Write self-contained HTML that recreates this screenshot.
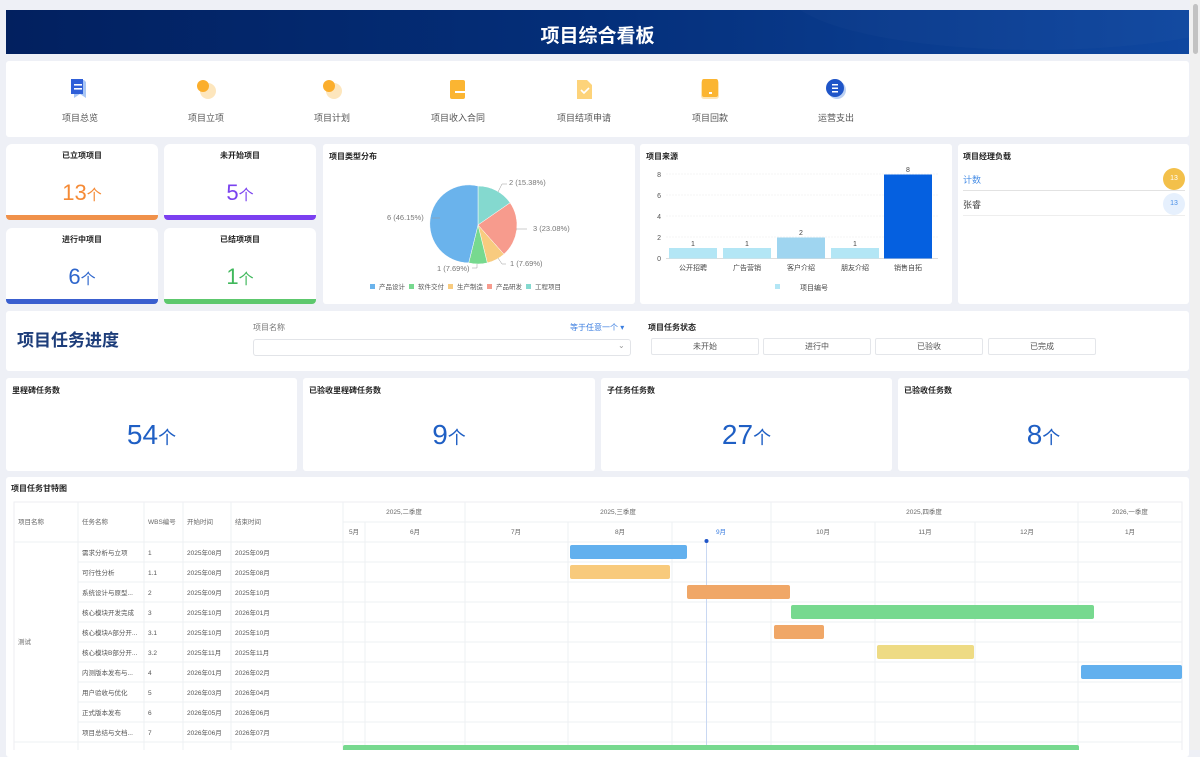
<!DOCTYPE html>
<html><head><meta charset="utf-8"><style>
*{margin:0;padding:0;box-sizing:border-box}
body{width:1200px;height:750px;overflow:hidden;background:#eef0f6;font-family:"Liberation Sans","Noto Sans CJK SC",sans-serif;color:#333;position:relative}
.a{position:absolute}
.card{position:absolute;background:#fff;border-radius:3px}
.t{font-size:8px;font-weight:bold;color:#222}
.nav{position:absolute;top:111px;font-size:9px;color:#555;width:100px;text-align:center;margin-left:-50px}
.ic{position:absolute;top:78px;width:22px;height:22px;margin-left:-11px}
.stat{text-align:center}
.stat .t{position:absolute;top:6px;left:0;right:0;text-align:center}
.stat .v{position:absolute;top:36px;left:0;right:0;text-align:center;font-size:22px}
.stat .v span{font-size:15px}
.stat .b{position:absolute;left:0;right:0;bottom:0;height:5px;border-radius:0 0 4px 4px}
.m .v{position:absolute;top:41px;left:0;right:0;text-align:center;font-size:28px;color:#1f5fc4}
.m .v span{font-size:18px}
.m .t{position:absolute;left:6px;top:7px}
.btn{position:absolute;top:338px;height:17px;width:108px;border:1px solid #e4e6ea;border-radius:2px;font-size:8px;color:#555;text-align:center;line-height:15px}
</style></head><body>
<div class="a" style="left:1190px;top:0;width:10px;height:750px;background:#f0f0f0"></div>
<div class="a" style="left:1193px;top:4px;width:5px;height:50px;background:#c2c2c2;border-radius:3px"></div>
<div class="a" style="left:6px;top:10px;width:1183px;height:44px;background:linear-gradient(90deg,#02205f 0%,#042f7a 50%,#0f47a0 100%);overflow:hidden">
<div class="a" style="left:780px;top:-80px;width:500px;height:120px;border-radius:50%;background:rgba(255,255,255,0.02)"></div>
<div class="a" style="left:0;right:0;top:11px;text-align:center;color:#fff;font-size:19px;font-weight:bold">项目综合看板</div>
</div>
<div class="card" style="left:6px;top:61px;width:1183px;height:76px"></div>
<svg class="ic" style="left:80px" viewBox="0 0 22 22"><path d="M5 2h10l2 2v16l-6-4-6 4z" fill="#a9c6f5"/><rect x="2" y="1" width="12" height="15" fill="#2f5fd8"/><rect x="5" y="6" width="8" height="1.6" fill="#fff"/><rect x="5" y="10" width="8" height="1.6" fill="#fff"/></svg>
<svg class="ic" style="left:206px" viewBox="0 0 22 22"><circle cx="13" cy="13" r="8" fill="#fde6bd"/><circle cx="8" cy="8" r="6" fill="#fbae2c"/></svg>
<svg class="ic" style="left:332px" viewBox="0 0 22 22"><circle cx="13" cy="13" r="8" fill="#fde6bd"/><circle cx="8" cy="8" r="6" fill="#fbae2c"/></svg>
<svg class="ic" style="left:458px" viewBox="0 0 22 22"><rect x="3" y="2" width="15" height="19" rx="2" fill="#fbb532"/><rect x="8" y="13" width="11" height="2" fill="#fff"/></svg>
<svg class="ic" style="left:584px" viewBox="0 0 22 22"><path d="M4 2h10l5 5v14H4z" fill="#fdd37a"/><path d="M8 12l3 3 5-5" stroke="#fff" stroke-width="1.6" fill="none"/></svg>
<svg class="ic" style="left:710px" viewBox="0 0 22 22"><rect x="2" y="2" width="18" height="19" rx="3" fill="#fde5b6"/><rect x="3" y="1" width="16" height="18" rx="2" fill="#fbb532"/><rect x="10" y="14" width="3" height="2" fill="#fff"/></svg>
<svg class="ic" style="left:836px" viewBox="0 0 22 22"><circle cx="12" cy="12" r="9" fill="#bcd1f3"/><circle cx="10" cy="10" r="9" fill="#1f55c8"/><rect x="7" y="6" width="6" height="1.5" fill="#fff"/><rect x="7" y="9.5" width="6" height="1.5" fill="#fff"/><rect x="7" y="13" width="6" height="1.5" fill="#fff"/></svg>
<div class="nav" style="left:80px">项目总览</div>
<div class="nav" style="left:206px">项目立项</div>
<div class="nav" style="left:332px">项目计划</div>
<div class="nav" style="left:458px">项目收入合同</div>
<div class="nav" style="left:584px">项目结项申请</div>
<div class="nav" style="left:710px">项目回款</div>
<div class="nav" style="left:836px">运营支出</div>
<div class="card stat" style="left:6px;top:144px;width:152px;height:76px;border-radius:6px"><div class="t">已立项项目</div><div class="v" style="color:#f58a35">13<span>个</span></div><div class="b" style="background:#f0914a"></div></div>
<div class="card stat" style="left:164px;top:144px;width:152px;height:76px;border-radius:6px"><div class="t">未开始项目</div><div class="v" style="color:#7a42ef">5<span>个</span></div><div class="b" style="background:#7b3ff0"></div></div>
<div class="card stat" style="left:6px;top:228px;width:152px;height:76px;border-radius:6px"><div class="t">进行中项目</div><div class="v" style="color:#2e66cc">6<span>个</span></div><div class="b" style="background:#3a5fcf"></div></div>
<div class="card stat" style="left:164px;top:228px;width:152px;height:76px;border-radius:6px"><div class="t">已结项项目</div><div class="v" style="color:#40b85c">1<span>个</span></div><div class="b" style="background:#5dc86d"></div></div>
<div class="card" style="left:323px;top:144px;width:312px;height:160px"><div class="t a" style="left:6px;top:7px">项目类型分布</div></div>
<svg class="a" style="left:0;top:0" width="1200" height="310">
<g stroke="#fff" stroke-width="0.5">
<path d="M478,225L478,186A39,39 0 0 1 510.1,202.8Z" fill="#84d9cf"/>
<path d="M478,225L510.1,202.8A39,39 0 0 1 503.9,254.2Z" fill="#f79b8d"/>
<path d="M478,225L503.9,254.2A39,39 0 0 1 487.3,262.9Z" fill="#f8cb7f"/>
<path d="M478,225L487.3,262.9A39,39 0 0 1 468.7,262.9Z" fill="#77d98f"/>
<path d="M478,225L468.7,262.9A39,39 0 1 1 478,186Z" fill="#6ab3ec"/>
</g>
<g stroke="#999" stroke-width="0.5" fill="none">
<path d="M498,192L502,184H507"/><path d="M516,229H527"/><path d="M498,258L502,264H506"/><path d="M477,264V268H472"/><path d="M440,218H432"/>
</g>
<g font-size="7.5" fill="#777" font-family="Liberation Sans,sans-serif">
<text x="509" y="185">2 (15.38%)</text><text x="533" y="231">3 (23.08%)</text><text x="510" y="266">1 (7.69%)</text><text x="437" y="271">1 (7.69%)</text><text x="387" y="220">6 (46.15%)</text>
</g>
<g font-size="6.5" fill="#555" font-family="Liberation Sans,Noto Sans CJK SC,sans-serif">
<rect x="370" y="284" width="5" height="5" fill="#6ab3ec"/><text x="379" y="289">产品设计</text>
<rect x="409" y="284" width="5" height="5" fill="#77d98f"/><text x="418" y="289">软件交付</text>
<rect x="448" y="284" width="5" height="5" fill="#f8cb7f"/><text x="457" y="289">生产制造</text>
<rect x="487" y="284" width="5" height="5" fill="#f79b8d"/><text x="496" y="289">产品研发</text>
<rect x="526" y="284" width="5" height="5" fill="#84d9cf"/><text x="535" y="289">工程项目</text>
</g>
</svg>
<div class="card" style="left:640px;top:144px;width:312px;height:160px"><div class="t a" style="left:6px;top:7px">项目来源</div></div>
<svg class="a" style="left:0;top:0" width="1200" height="310">
<g stroke="#eee" stroke-width="0.6" stroke-dasharray="2,1"><path d="M666,174H938M666,195H938M666,216H938M666,237H938"/></g>
<path d="M666,258.5H938" stroke="#ddd"/>
<g font-size="7" fill="#555" font-family="Liberation Sans,sans-serif" text-anchor="end"><text x="661" y="177">8</text><text x="661" y="198">6</text><text x="661" y="219">4</text><text x="661" y="240">2</text><text x="661" y="261">0</text></g>
<rect x="669" y="248" width="48" height="10.5" fill="#b3e6f5"/><rect x="723" y="248" width="48" height="10.5" fill="#b3e6f5"/><rect x="777" y="237.5" width="48" height="21" fill="#9fd5f0"/><rect x="831" y="248" width="48" height="10.5" fill="#b3e6f5"/><rect x="884" y="174.5" width="48" height="84" fill="#0560e0"/>
<g font-size="7" fill="#444" font-family="Liberation Sans,Noto Sans CJK SC,sans-serif" text-anchor="middle">
<text x="693" y="246">1</text><text x="747" y="246">1</text><text x="801" y="235">2</text><text x="855" y="246">1</text><text x="908" y="172">8</text>
<text x="693" y="270">公开招聘</text><text x="747" y="270">广告营销</text><text x="801" y="270">客户介绍</text><text x="855" y="270">朋友介绍</text><text x="908" y="270">销售自拓</text>
<text x="800" y="290" text-anchor="start">项目编号</text></g>
<rect x="775" y="284" width="5" height="5" fill="#b3e6f5"/>
</svg>
<div class="card" style="left:958px;top:144px;width:231px;height:160px">
<div class="t a" style="left:5px;top:7px">项目经理负载</div>
<div class="a" style="left:5px;top:29px;font-size:9px;color:#4a8fe6">计数</div>
<div class="a" style="left:205px;top:24px;width:22px;height:22px;border-radius:50%;background:#f3c04a;color:#fff;font-size:7px;text-align:center;line-height:22px">13</div>
<div class="a" style="left:5px;top:46px;width:222px;height:1px;background:#e2e2e2"></div>
<div class="a" style="left:5px;top:54px;font-size:9px;color:#444">张睿</div>
<div class="a" style="left:205px;top:49px;width:22px;height:22px;border-radius:50%;background:#e6f0fd;color:#4a8fe6;font-size:7px;text-align:center;line-height:22px">13</div>
<div class="a" style="left:5px;top:71px;width:222px;height:1px;background:#eee"></div>
</div>
<div class="card" style="left:6px;top:311px;width:1183px;height:60px"></div>
<div class="a" style="left:17px;top:326px;font-size:17px;font-weight:bold;color:#1d3d7a">项目任务进度</div>
<div class="a" style="left:253px;top:322px;font-size:8px;color:#777">项目名称</div>
<div class="a" style="left:570px;top:322px;font-size:8px;color:#3b7ee0">等于任意一个 ▾</div>
<div class="a" style="left:253px;top:339px;width:378px;height:17px;border:1px solid #e2e4e8;border-radius:3px"></div>
<div class="a" style="left:618px;top:341px;font-size:8px;color:#999">⌄</div>
<div class="a" style="left:648px;top:322px;font-size:8px;font-weight:bold;color:#222">项目任务状态</div>
<div class="btn" style="left:651px">未开始</div><div class="btn" style="left:763px">进行中</div><div class="btn" style="left:875px">已验收</div><div class="btn" style="left:988px">已完成</div>
<div class="card m" style="left:6px;top:378px;width:291px;height:93px"><div class="t">里程碑任务数</div><div class="v">54<span>个</span></div></div>
<div class="card m" style="left:303px;top:378px;width:292px;height:93px"><div class="t">已验收里程碑任务数</div><div class="v">9<span>个</span></div></div>
<div class="card m" style="left:601px;top:378px;width:291px;height:93px"><div class="t">子任务任务数</div><div class="v">27<span>个</span></div></div>
<div class="card m" style="left:898px;top:378px;width:291px;height:93px"><div class="t">已验收任务数</div><div class="v">8<span>个</span></div></div>
<div class="card" style="left:6px;top:477px;width:1183px;height:280px"><div class="t a" style="left:5px;top:6px">项目任务甘特图</div></div>
<svg class="a" style="left:0;top:0" width="1200" height="750" font-family="Liberation Sans,Noto Sans CJK SC,sans-serif">
<rect x="14" y="502" width="1168" height="260" fill="none" stroke="#eceef2"/>
<g stroke="#eef0f3" stroke-width="1">
<path d="M78,502V750M144,502V750M183,502V750M231,502V750M343,502V750"/>
<path d="M343,522H1182"/>
<path d="M465,502V750M771,502V750M1078,502V750"/>
<path d="M365,522V750M568,522V750M672,522V750M875,522V750M975,522V750"/>
<path d="M14,542H1182M78,562H1182M78,582H1182M78,602H1182M78,622H1182M78,642H1182M78,662H1182M78,682H1182M78,702H1182M78,722H1182M14,742H1182"/>
</g>
<g font-size="6.5" fill="#666">
<text x="18" y="524">项目名称</text><text x="82" y="524">任务名称</text><text x="148" y="524">WBS编号</text><text x="187" y="524">开始时间</text><text x="235" y="524">结束时间</text>
<g text-anchor="middle"><text x="404" y="514">2025,二季度</text><text x="618" y="514">2025,三季度</text><text x="924" y="514">2025,四季度</text><text x="1130" y="514">2026,一季度</text>
<text x="354" y="534">5月</text><text x="415" y="534">6月</text><text x="516" y="534">7月</text><text x="620" y="534">8月</text><text x="721" y="534" fill="#3b7ee0">9月</text><text x="823" y="534">10月</text><text x="925" y="534">11月</text><text x="1027" y="534">12月</text><text x="1130" y="534">1月</text></g>
<text x="18" y="644">测试</text>
</g>
<g font-size="6.5" fill="#555">
<text x="82" y="555">需求分析与立项</text><text x="148" y="555">1</text><text x="187" y="555">2025年08月</text><text x="235" y="555">2025年09月</text>
<text x="82" y="575">可行性分析</text><text x="148" y="575">1.1</text><text x="187" y="575">2025年08月</text><text x="235" y="575">2025年08月</text>
<text x="82" y="595">系统设计与原型...</text><text x="148" y="595">2</text><text x="187" y="595">2025年09月</text><text x="235" y="595">2025年10月</text>
<text x="82" y="615">核心模块开发完成</text><text x="148" y="615">3</text><text x="187" y="615">2025年10月</text><text x="235" y="615">2026年01月</text>
<text x="82" y="635">核心模块A部分开...</text><text x="148" y="635">3.1</text><text x="187" y="635">2025年10月</text><text x="235" y="635">2025年10月</text>
<text x="82" y="655">核心模块B部分开...</text><text x="148" y="655">3.2</text><text x="187" y="655">2025年11月</text><text x="235" y="655">2025年11月</text>
<text x="82" y="675">内测版本发布与...</text><text x="148" y="675">4</text><text x="187" y="675">2026年01月</text><text x="235" y="675">2026年02月</text>
<text x="82" y="695">用户验收与优化</text><text x="148" y="695">5</text><text x="187" y="695">2026年03月</text><text x="235" y="695">2026年04月</text>
<text x="82" y="715">正式版本发布</text><text x="148" y="715">6</text><text x="187" y="715">2026年05月</text><text x="235" y="715">2026年06月</text>
<text x="82" y="735">项目总结与文档...</text><text x="148" y="735">7</text><text x="187" y="735">2026年06月</text><text x="235" y="735">2026年07月</text>
</g>
<path d="M706.5,541V750" stroke="#c9d8f2"/><circle cx="706.5" cy="541" r="2" fill="#1f55c8"/>
<rect x="570" y="545" width="117" height="14" rx="2" fill="#62b0ee"/>
<rect x="570" y="565" width="100" height="14" rx="2" fill="#f8ca7c"/>
<rect x="687" y="585" width="103" height="14" rx="2" fill="#f0a767"/>
<rect x="791" y="605" width="303" height="14" rx="2" fill="#77d98f"/>
<rect x="774" y="625" width="50" height="14" rx="2" fill="#f0a767"/>
<rect x="877" y="645" width="97" height="14" rx="2" fill="#eedb84"/>
<rect x="1081" y="665" width="101" height="14" rx="2" fill="#62b0ee"/>
<rect x="343" y="745" width="736" height="14" rx="2" fill="#77d98f"/>
</svg>
</body></html>
